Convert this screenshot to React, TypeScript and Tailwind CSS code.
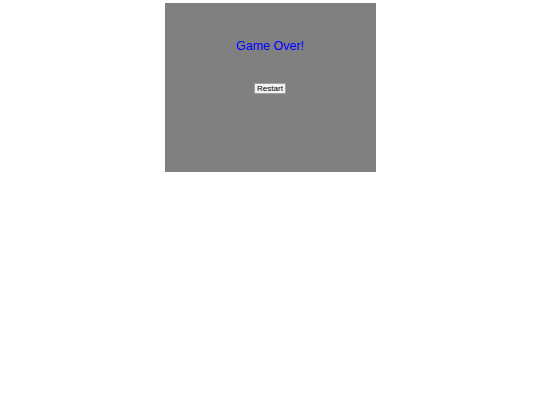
import React from 'react'

export default function App() {
  return (
    <div className="w-[540px] h-[405px] bg-white pt-[3px] font-['Liberation_Sans',Arial,sans-serif]">
      {/* Game board */}
      <div className="mx-auto w-[211px] h-[169px] bg-[#808080] flex flex-col items-center">
        <div className="mt-[35px] text-[12.5px] leading-[16px] text-[#0000ff]">Game Over!</div>
        <button className="mt-[29px] bg-[#f2f2f2] border border-[#a0a0a0] rounded-[1px] px-[2px] h-[11px] text-[8px] leading-[9px] text-black">
          Restart
        </button>
      </div>
    </div>
  )
}
